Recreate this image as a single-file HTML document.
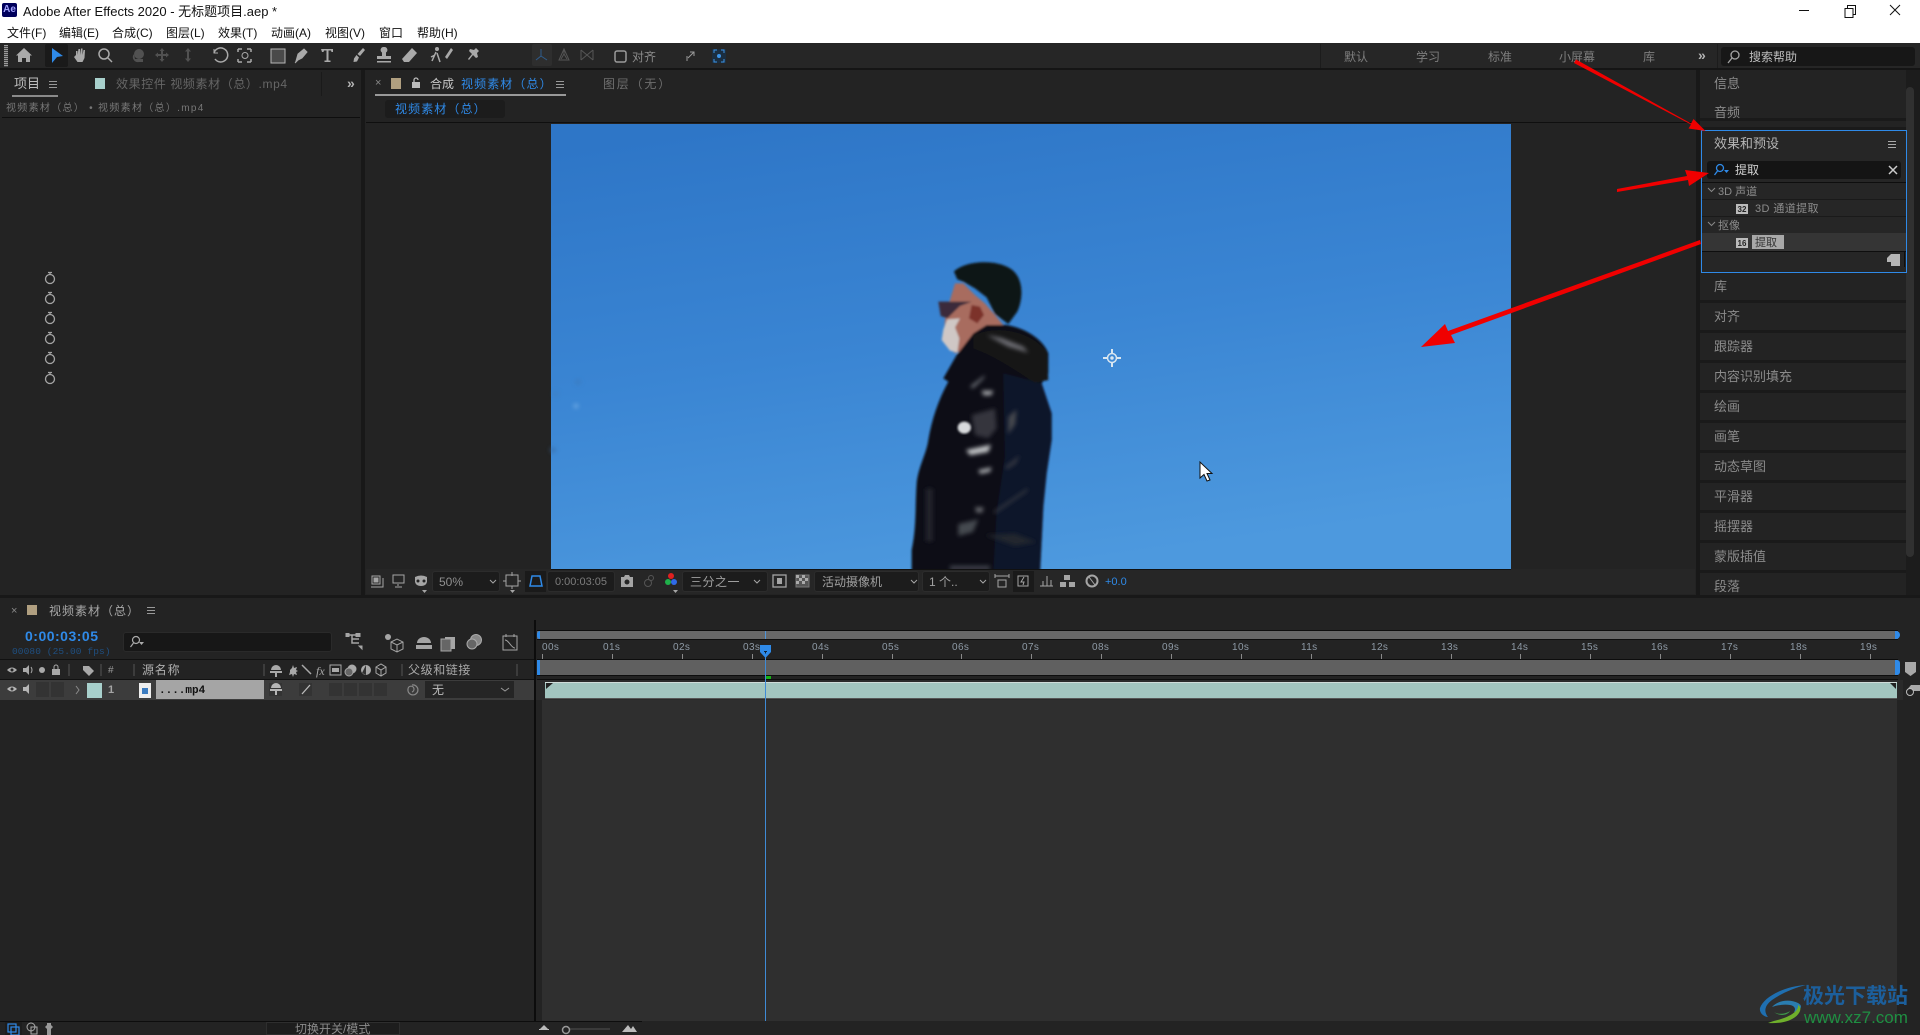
<!DOCTYPE html>
<html><head><meta charset="utf-8"><style>
html,body{margin:0;padding:0;width:1920px;height:1035px;overflow:hidden;background:#181818}
body{position:relative;font-family:"Liberation Sans","WenQuanYi Zen Hei","Noto Sans CJK SC",sans-serif;font-size:12px;color:#8f8f8f}
.a,.t{position:absolute}
.t{white-space:nowrap;line-height:16px;height:16px}
.m{color:#111;font-family:"Liberation Sans","Noto Sans CJK SC",sans-serif;font-size:12px;top:25px}
.w{color:#7e7e7e;top:49px}
.r{left:1714px;color:#8b8b8b;font-size:13px;transform:translateY(1px)}
.sep{position:absolute;left:1700px;width:206px;height:3px;background:#1a1a1a}
.n{top:642px;font-size:10px;letter-spacing:.4px;color:#8e9aa6;line-height:12px;height:12px}
.k{position:absolute;top:654px;width:1px;height:5px;background:#8a8a8a}
.box{position:absolute;background:#1c1c1c;border:1px solid #2c2c2c;border-radius:3px;box-sizing:border-box;height:21px;top:571px}
svg{position:absolute;overflow:visible}
.b{color:#2f8ae8}
</style></head><body>

<!-- title bar -->
<div class="a" style="left:0;top:0;width:1920px;height:43px;background:#fff"></div>
<div class="a" style="left:2px;top:3px;width:15px;height:14px;background:#00005b;border-radius:2px;color:#a3a3ff;font-size:10px;font-weight:bold;line-height:14px;text-align:center">Ae</div>
<div class="t" style="left:23px;top:4px;color:#111;font-size:13px;font-family:'Liberation Sans','Noto Sans CJK SC',sans-serif">Adobe After Effects 2020 - 无标题项目.aep *</div>
<div class="t m" style="left:7px">文件(F)</div><div class="t m" style="left:59px">编辑(E)</div><div class="t m" style="left:112px">合成(C)</div><div class="t m" style="left:166px">图层(L)</div><div class="t m" style="left:218px">效果(T)</div><div class="t m" style="left:271px">动画(A)</div><div class="t m" style="left:325px">视图(V)</div><div class="t m" style="left:379px">窗口</div><div class="t m" style="left:417px">帮助(H)</div>
<svg style="left:0;top:0" width="1920" height="30" fill="none" stroke="#111" stroke-width="1"><path d="M1799 10.500h10"/><path d="M1845 8.500h8v9h-8zM1847.500 8v-2.500h8v9h-2.500"/><path d="M1890 5l10 10M1900 5l-10 10"/></svg>

<!-- toolbar -->
<div class="a" style="left:0;top:43px;width:1920px;height:25px;background:#262626"></div>
<div class="a" style="left:0;top:68px;width:1920px;height:2px;background:#151515"></div>
<div class="a" style="left:4px;top:45px;width:4px;height:22px;background:repeating-linear-gradient(#9a9a9a 0 1px,#444 1px 2px)"></div>
<div class="a" style="left:45px;top:44px;width:23px;height:23px;background:#1a1a1a;border-radius:2px"></div>
<svg style="left:0;top:43px" width="760" height="25" viewBox="0 0 760 25">
<g fill="#a9a9a9"><path d="M24 5l8 7.500h-2v6.500h-4v-4h-4v4h-4v-6.500h-2z"/>
<path d="M52 5l11 8-6 1-5 6z" fill="#2f8ae8"/>
<path d="M76 12v-4l1.500 0v4l1-6h1.500v6l1-6.500h1.500v6.500l1-5h1.500l-.5 8-2 4h-5l-3.500-5z"/></g>
<g fill="none" stroke="#a9a9a9" stroke-width="1.500"><circle cx="104" cy="11" r="5"/><path d="M108 15l4 4"/>
<path d="M214 10a7 7 0 1 1 1 6" /><path d="M214 6v4h4" stroke-width="1"/>
<path d="M238 6h4M247 6h4M238 19h4M247 19h4M238 6v3M251 6v3M238 16v3M251 16v3" /><circle cx="245" cy="12.500" r="3" stroke-width="1"/>
</g>
<g fill="#515151"><circle cx="139" cy="11" r="5"/><path d="M134 11a5 5 0 0 0 5 8h4v-3h-8z"/><path d="M162 5l2.500 3h-1.500v3h3v-1.500l3 2.500-3 2.500v-1.500h-3v3h1.500l-2.500 3-2.500-3h1.500v-3h-3v1.500l-3-2.500 3-2.500v1.500h3v-3h-1.500z"/><path d="M188 5l3 3.500h-2v7h2l-3 3.500-3-3.500h2v-7h-2z"/></g>
<rect x="271" y="6" width="14" height="14" fill="#4a4a4a" stroke="#b5b5b5"/>
<path d="M296 18l2-7 6-5 3 3-5 6zM295 20l3-3" fill="#a9a9a9" stroke="#a9a9a9"/>
<path d="M321 6h12v3h-1.500l-.5-1.500h-2.500v10h2v1.500h-6v-1.500h2v-10h-2.500l-.5 1.500h-1.500z" fill="#a9a9a9"/>
<path d="M363 5l2 2-5 6-2.500-2zM356.500 12l2.500 2.500-2 4-3.500 .5.500-3.500z" fill="#a9a9a9"/>
<path d="M384 4a3 3 0 0 1 2 5.500v3.500h5v3h-14v-3h5v-3.500a3 3 0 0 1 2-5.500zM377 18h14v1.500h-14z" fill="#a9a9a9"/>
<path d="M412 5l5 5-8 9h-5l-2-3z" fill="#a9a9a9"/>
<circle cx="437" cy="6" r="2" fill="#a9a9a9"/><path d="M436 9l-4 9M437 10l3 9M435 12l-4 2" stroke="#a9a9a9" stroke-width="1.500"/><path d="M451 5l-6 9 2 2 6-9z" fill="#a9a9a9"/>
<path d="M476 5l3 3-2 2 1 4-2 1-3-3-4 5-1-1 4-5-3-3 1-2 4 1z" fill="#a9a9a9"/>
<rect x="532" y="1" width="20" height="22" fill="#2e2e2e" rx="2"/>
<g stroke="#2e5c8c" fill="none"><path d="M541 6v7l-5 4M541 13l6 4"/></g>
<g stroke="#555" fill="none"><path d="M564 6l-5 11h10z M564 6v5l-3 5M564 11l3 5"/><path d="M581 7l12 10M581 17l12-10M581 7v10M593 7v10" /></g>
<rect x="615" y="8" width="11" height="11" fill="none" stroke="#9a9a9a" stroke-width="1.500" rx="2"/>
<path d="M688 15l6-6M694 13v-4h-4M687 13v5" stroke="#9a9a9a" fill="none"/>
<rect x="712" y="6" width="14" height="14" fill="#1b2e40"/><path d="M714 10v-3h3M724 10v-3h-3M714 16v3h3M724 16v3h-3" stroke="#3d94e6" fill="none"/><circle cx="719" cy="13" r="2" fill="#3d94e6"/>
</svg>
<div class="t" style="left:632px;top:49px;color:#8a8a8a">对齐</div>
<div class="t w" style="left:1344px">默认</div><div class="t w" style="left:1416px">学习</div><div class="t w" style="left:1488px">标准</div><div class="t w" style="left:1559px">小屏幕</div><div class="t w" style="left:1643px">库</div>
<div class="t" style="left:1698px;top:47px;color:#b5b5b5;font-weight:bold;font-size:14px">»</div>
<div class="a" style="left:1721px;top:47px;width:194px;height:19px;background:#171717;border-radius:3px"></div>
<svg style="left:1726px;top:49px" width="16" height="16" fill="none" stroke="#a5a5a5" stroke-width="1.300"><circle cx="9" cy="6" r="4"/><path d="M6 9l-4 5"/></svg>
<div class="t" style="left:1749px;top:49px;color:#bdbdbd">搜索帮助</div>
<div class="a" style="left:1320px;top:44px;width:1px;height:24px;background:#1c1c1c"></div>
<div class="a" style="left:1717px;top:44px;width:1px;height:24px;background:#1c1c1c"></div>

<!-- left panel -->
<div class="a" style="left:0;top:70px;width:361px;height:525px;background:#232323"></div>
<div class="a" style="left:2px;top:117px;width:358px;height:1px;background:#0e0e0e"></div>
<div class="t" style="left:14px;top:76px;color:#bdbdbd;font-size:13px">项目</div>
<div class="a" style="left:12px;top:95px;width:46px;height:2px;background:#8a8a8a"></div>
<svg style="left:49px;top:80px" width="10" height="10" stroke="#999"><path d="M0 1.500h8M0 4.500h8M0 7.500h8"/></svg>
<div class="a" style="left:95px;top:78px;width:10px;height:11px;background:#a8d0cc"></div>
<div class="t" style="left:116px;top:76px;color:#666;letter-spacing:.6px">效果控件 视频素材（总）.mp4</div>
<div class="a" style="left:321px;top:72px;width:1px;height:24px;background:#1a1a1a"></div>
<div class="t" style="left:347px;top:75px;color:#b5b5b5;font-weight:bold;font-size:14px">»</div>
<div class="t" style="left:6px;top:101px;color:#777;font-size:10px;letter-spacing:1.300px">视频素材（总） • 视频素材（总）.mp4</div>
<svg style="left:44px;top:270px" width="14" height="120" fill="none" stroke="#a5a5a5" stroke-width="1.300">
<g><circle cx="6" cy="9" r="4.500"/><path d="M6 2v3M4 2.500h4"/></g>
<g transform="translate(0,20)"><circle cx="6" cy="9" r="4.500"/><path d="M6 2v3M4 2.500h4"/></g>
<g transform="translate(0,40)"><circle cx="6" cy="9" r="4.500"/><path d="M6 2v3M4 2.500h4"/></g>
<g transform="translate(0,60)"><circle cx="6" cy="9" r="4.500"/><path d="M6 2v3M4 2.500h4"/></g>
<g transform="translate(0,80)"><circle cx="6" cy="9" r="4.500"/><path d="M6 2v3M4 2.500h4"/></g>
<g transform="translate(0,100)"><circle cx="6" cy="9" r="4.500"/><path d="M6 2v3M4 2.500h4"/></g>
</svg>

<!-- comp panel -->
<div class="a" style="left:365px;top:70px;width:1331px;height:525px;background:#232323"></div>
<div class="t" style="left:375px;top:75px;color:#888;font-size:11px">×</div>
<div class="a" style="left:391px;top:78px;width:10px;height:11px;background:#b09f80"></div>
<svg style="left:411px;top:77px" width="11" height="12"><rect x="1" y="5" width="8" height="6" fill="#bbb"/><path d="M3 5V3a2 2 0 0 1 4 0" fill="none" stroke="#bbb" stroke-width="1.300"/></svg>
<div class="t" style="left:430px;top:76px;color:#c8c8c8">合成</div>
<div class="t b" style="left:461px;top:76px;letter-spacing:1.100px">视频素材（总）</div>
<svg style="left:556px;top:80px" width="10" height="10" stroke="#999"><path d="M0 1.500h8M0 4.500h8M0 7.500h8"/></svg>
<div class="a" style="left:375px;top:94px;width:191px;height:2px;background:#999"></div>
<div class="t" style="left:603px;top:76px;color:#6f6f6f;letter-spacing:1.800px">图层（无）</div>
<div class="a" style="left:385px;top:100px;width:120px;height:18px;background:#1c1c1c;border-radius:3px"></div>
<div class="t b" style="left:395px;top:101px;letter-spacing:1.100px">视频素材（总）</div>
<div class="a" style="left:366px;top:122px;width:1329px;height:1px;background:#0f0f0f"></div>

<!-- viewer image -->
<svg style="left:551px;top:124px" width="960" height="445" viewBox="551 124 960 445">
<defs><linearGradient id="sky" x1="0.200" y1="0" x2="0.500" y2="1"><stop offset="0" stop-color="#2e76c7"/><stop offset=".5" stop-color="#3a85d3"/><stop offset="1" stop-color="#4d99de"/></linearGradient>
<filter id="bs" x="-10%" y="-10%" width="120%" height="120%"><feGaussianBlur stdDeviation="3.500"/></filter><filter id="bt" x="-20%" y="-20%" width="140%" height="140%"><feGaussianBlur stdDeviation="6"/></filter><filter id="b2" x="-50%" y="-50%" width="200%" height="200%"><feGaussianBlur stdDeviation="2"/></filter></defs>
<clipPath id="cp"><rect x="551" y="124" width="960" height="445"/></clipPath>
<rect x="551" y="124" width="960" height="445" fill="url(#sky)"/>
<g filter="url(#b2)" opacity=".55"><circle cx="578" cy="382" r="3" fill="#3b78b8"/><circle cx="576" cy="406" r="2.500" fill="#8dc0ee"/><circle cx="553" cy="450" r="3" fill="#38689e"/><circle cx="556" cy="394" r="3" fill="#3f7fc0"/></g>
<g clip-path="url(#cp)"><g transform="translate(860,240) scale(.3333)">
<g filter="url(#bs)">
<!-- face -->
<path d="M285 130L270 180 255 240 250 300 285 340 320 325 360 270 430 255 405 225 375 190 345 165 310 130z" fill="#a86c5f"/>
<path d="M335 195l25 5 12 25-20 25-25-15z" fill="#7c302c"/>
<!-- mask -->
<path d="M262 238L250 268 245 300 270 332 292 338 298 295 285 262 300 235z" fill="#cfc7c5"/>
<!-- glasses -->
<path d="M235 185L335 185 300 198 262 235 242 228z" fill="#3a2c3a"/>
<!-- hair -->
<path d="M282 95C310 65 400 55 450 85 490 110 492 170 472 215L445 252 405 222 380 172 345 145 310 125 292 118z" fill="#111619"/>
<!-- coat -->
<path d="M290 345L250 415 265 425C235 480 215 540 205 600 200 640 175 680 170 730 165 800 170 860 155 930L155 1000 540 1000 550 800 560 700 575 600 575 520 545 430 565 400 565 340C550 300 500 265 440 255L380 255 340 280z" fill="#090c14"/>
<path d="M430 400L545 430 575 520 575 600 560 700 550 800 540 1000 400 1000 410 820 435 650z" fill="#10162a"/>
<path d="M340 290C380 258 500 260 560 335L565 420 525 428C470 395 420 355 340 325z" fill="#151519"/>
</g>
<g filter="url(#bt)">
<path d="M380 285l65 35 60 18-15-18-65-26z" fill="#6e6e74"/>
<path d="M330 440l45-35-4 10-32 30z" fill="#70737a"/>
<path d="M365 452h35l-6 14h-24z" fill="#a0a2a6"/>
<path d="M335 525l70-20 5 60-25 30-40-10z" fill="#34363d"/>
<path d="M318 630l75-16-8 22-55 10z" fill="#c0c2c5"/>
<path d="M355 690l40-8-5 14-30 6z" fill="#a5a7ab"/>
<path d="M445 530l25-22-4 45-22 30z" fill="#44464e"/>
<path d="M435 680l45-35-12 26-28 18z" fill="#333540"/>
<path d="M400 815l105-72-5 12-95 66z" fill="#343740"/>
<rect x="197" y="745" width="22" height="160" fill="#20242b"/>
<path d="M295 852l60-14-16 38-44 12z" fill="#45484f"/>
<path d="M345 802h26l-4 16h-18z" fill="#66686d"/>
<path d="M375 885l90-4 65 25-65 12z" fill="#22252d"/>
<rect x="270" y="977" width="120" height="14" fill="#3d4149"/>
</g>
<ellipse cx="313" cy="563" rx="20" ry="18" fill="#d8dadd" filter="url(#bs)"/>
</g></g>
</svg>
<svg style="left:1102px;top:348px" width="20" height="20" fill="none" stroke="#d9e6f0" stroke-width="1.500"><circle cx="10" cy="10" r="4.500"/><circle cx="10" cy="10" r="1" fill="#d9e6f0"/><path d="M10 1v5M10 14v5M1 10h5M14 10h5" stroke-width="2"/></svg>
<svg style="left:1199px;top:461px" width="14" height="22"><path d="M1 1v16l4-3.500 3 6.500 3-1-3-6.500h5z" fill="#fff" stroke="#111"/></svg>

<!-- viewer toolbar -->
<div class="a" style="left:366px;top:569px;width:1329px;height:25px;background:#262626"></div>
<div class="a" style="left:551px;top:569px;width:960px;height:1px;background:#111"></div>
<div class="box" style="left:432px;width:68px"></div><div class="box" style="left:547px;width:68px"></div><div class="box" style="left:682px;width:86px"></div><div class="box" style="left:814px;width:105px"></div><div class="box" style="left:922px;width:68px"></div>
<div class="a" style="left:525px;top:571px;width:21px;height:21px;background:#1a1a1a"></div>
<div class="a" style="left:1013px;top:571px;width:21px;height:21px;background:#1a1a1a"></div>
<div class="t" style="left:439px;top:574px;color:#8f8f8f">50%</div>
<div class="t" style="left:555px;top:574px;color:#7c7c7c;font-size:11px">0:00:03:05</div>
<div class="t" style="left:690px;top:574px;color:#a0a0a0;letter-spacing:.5px">三分之一</div>
<div class="t" style="left:822px;top:574px;color:#a0a0a0">活动摄像机</div>
<div class="t" style="left:929px;top:574px;color:#a0a0a0">1 个..</div>
<div class="t" style="left:1105px;top:574px;color:#2f8ae8;font-size:11px">+0.0</div>
<svg style="left:360px;top:569px" width="760" height="25" viewBox="360 569 760 25" fill="none" stroke="#a5a5a5">
<path d="M372 576h8v8h-8zM371 587h12v-9" /><rect x="374" y="578" width="4" height="4" fill="#a5a5a5"/>
<rect x="393" y="575" width="11" height="8"/><path d="M398 584v2M395 587h7"/>
<path d="M415 577q6-3 12 0v5q-1 4-6 4t-6-4z" fill="#a5a5a5" stroke="none"/><circle cx="418" cy="581" r="1.500" fill="#222" stroke="none"/><circle cx="424" cy="581" r="1.500" fill="#222" stroke="none"/>
<path d="M490 580l3 3 3-3" /><path d="M754 580l3 3 3-3M911 580l3 3 3-3M980 580l3 3 3-3"/>
<rect x="506" y="575" width="12" height="11"/><path d="M512 572v4M512 586v3M503 581h3M518 581h3"/>
<path d="M530 586l2-10h8l2 10z" stroke="#2f8ae8" stroke-width="1.500"/>
<path d="M621 577h3l1-2h4l1 2h3v10h-12z" fill="#a5a5a5" stroke="none"/><circle cx="627" cy="582" r="2.500" fill="#262626" stroke="none"/>
<circle cx="648" cy="583" r="3.500" stroke="#555"/><circle cx="651" cy="578" r="2.500" stroke="#555"/>
<circle cx="671" cy="576" r="3" fill="#e02020" stroke="none"/><circle cx="668" cy="582" r="3" fill="#1fb04a" stroke="none"/><circle cx="674" cy="582" r="3" fill="#2f6ae8" stroke="none"/>
<rect x="773" y="575" width="13" height="12" stroke-width="1.300"/><rect x="777" y="578" width="5" height="6" fill="#a5a5a5" stroke="none"/>
<rect x="796" y="575" width="13" height="12" fill="#555" stroke="#777"/><path d="M796 575h3v3h-3zM802 575h3v3h-3zM799 578h3v3h-3zM805 578h3v3h-3zM796 581h3v3h-3zM802 581h3v3h-3z" fill="#aaa" stroke="none"/>
<path d="M995 576h14M995 574v4M1009 574v4M998 580h8v7h-8z"/>
<path d="M1018 576h10v10h-10z"/><path d="M1024 577l-3 5h3l-1 3" />
<path d="M1040 586h13M1043 586v-5M1047 586v-10M1051 586v-6"/>
<rect x="1064" y="575" width="6" height="5" fill="#a5a5a5" stroke="none"/><rect x="1060" y="582" width="6" height="5" fill="#a5a5a5" stroke="none"/><rect x="1069" y="582" width="6" height="5" fill="#a5a5a5" stroke="none"/>
<circle cx="1092" cy="581" r="5.500" stroke-width="2"/><path d="M1089 577l6 8" />
</svg>
<svg style="left:360px;top:590px" width="330" height="6" fill="#a5a5a5"><path d="M62 0h5l-2.500 3zM150 0h5l-2.500 3zM313 0h5l-2.500 3z"/></svg>

<!-- right panel -->
<div class="a" style="left:1700px;top:70px;width:206px;height:525px;background:#232323"></div>
<div class="a" style="left:1906px;top:70px;width:14px;height:525px;background:#1c1c1c"></div>
<div class="a" style="left:1906px;top:87px;width:8px;height:470px;background:#303030;border-radius:4px"></div>
<div class="sep" style="top:118px"></div><div class="sep" style="top:127px;height:3px"></div>
<div class="t r" style="top:75px">信息</div><div class="t r" style="top:104px">音频</div>
<div class="t r" style="top:278px">库</div><div class="t r" style="top:308px">对齐</div><div class="t r" style="top:338px">跟踪器</div><div class="t r" style="top:368px">内容识别填充</div><div class="t r" style="top:398px">绘画</div><div class="t r" style="top:428px">画笔</div><div class="t r" style="top:458px">动态草图</div><div class="t r" style="top:488px">平滑器</div><div class="t r" style="top:518px">摇摆器</div><div class="t r" style="top:548px">蒙版插值</div><div class="t r" style="top:578px">段落</div>
<div class="sep" style="top:300px"></div><div class="sep" style="top:330px"></div><div class="sep" style="top:360px"></div><div class="sep" style="top:390px"></div><div class="sep" style="top:420px"></div><div class="sep" style="top:450px"></div><div class="sep" style="top:480px"></div><div class="sep" style="top:510px"></div><div class="sep" style="top:540px"></div><div class="sep" style="top:570px"></div>
<!-- effects -->
<div class="a" style="left:1701px;top:130px;width:206px;height:143px;box-sizing:border-box;border:1px solid #2f8ae8;background:#262626"></div>
<div class="t" style="left:1714px;top:136px;color:#b5b5b5;font-size:13px">效果和预设</div>
<svg style="left:1888px;top:140px" width="10" height="10" stroke="#aaa"><path d="M0 1.500h8M0 4.500h8M0 7.500h8"/></svg>
<div class="a" style="left:1707px;top:161px;width:194px;height:18px;background:#141414;border-radius:3px"></div>
<svg style="left:1713px;top:163px" width="20" height="14" fill="none" stroke="#2f8ae8" stroke-width="1.300"><circle cx="7" cy="5" r="3.500"/><path d="M4.500 8l-3 4"/><path d="M11 7h5l-2.500 3z" fill="#2f8ae8" stroke="none"/></svg>
<div class="t" style="left:1735px;top:162px;color:#d0d0d0;font-size:12px">提取</div>
<svg style="left:1889px;top:166px" width="9" height="9" stroke="#ccc" stroke-width="1.500"><path d="M0 0l8 8M8 0l-8 8"/></svg>
<div class="a" style="left:1702px;top:182px;width:204px;height:1px;background:#0e0e0e"></div>
<div class="a" style="left:1702px;top:199px;width:204px;height:1px;background:#1a1a1a"></div>
<div class="a" style="left:1702px;top:216px;width:204px;height:1px;background:#1a1a1a"></div>
<div class="a" style="left:1702px;top:233px;width:204px;height:18px;background:#353535"></div>
<div class="a" style="left:1752px;top:235px;width:32px;height:14px;background:#a8a8a8"></div>
<div class="a" style="left:1702px;top:251px;width:204px;height:1px;background:#0e0e0e"></div>
<div class="a" style="left:1904px;top:252px;width:1px;height:15px;background:#0e0e0e"></div>
<svg style="left:1708px;top:185px" width="10" height="50" fill="none" stroke="#888"><path d="M0 3l3.500 3.500L7 3M0 37l3.500 3.500L7 37"/></svg>
<div class="t" style="left:1718px;top:184px;color:#8c8c8c;font-size:11px">3D 声道</div>
<div class="t" style="left:1755px;top:201px;color:#8c8c8c;font-size:11px;letter-spacing:.4px">3D 通道提取</div>
<div class="t" style="left:1718px;top:218px;color:#8c8c8c;font-size:11px">抠像</div>
<div class="t" style="left:1755px;top:235px;color:#333;font-size:11px">提取</div>
<div class="a" style="left:1736px;top:204px;width:12px;height:10px;background:#bbb;font-size:8px;line-height:11px;color:#222;font-weight:bold;text-align:center">32</div>
<div class="a" style="left:1736px;top:238px;width:12px;height:10px;background:#bbb;font-size:8px;line-height:11px;color:#222;font-weight:bold;text-align:center">16</div>
<svg style="left:1887px;top:254px" width="13" height="12"><path d="M4 0h9v12H4V8H0V4z" fill="#b5b5b5"/></svg>

<!-- timeline -->
<div class="a" style="left:0;top:598px;width:1920px;height:423px;background:#232323"></div>
<div class="t" style="left:11px;top:603px;color:#888;font-size:11px">×</div>
<div class="a" style="left:27px;top:605px;width:10px;height:10px;background:#b09f80"></div>
<div class="t" style="left:49px;top:603px;color:#a8a8a8;letter-spacing:1px">视频素材（总）</div>
<svg style="left:147px;top:606px" width="10" height="10" stroke="#999"><path d="M0 1.500h8M0 4.500h8M0 7.500h8"/></svg>
<div class="t" style="left:25px;top:628px;color:#2f8ae8;font-weight:bold;font-size:14px;letter-spacing:.5px">0:00:03:05</div>
<div class="t" style="left:12px;top:644px;color:#1f4f80;font-size:9.500px;letter-spacing:.1px;font-family:'Liberation Mono',monospace">00080 (25.00 fps)</div>
<div class="a" style="left:123px;top:632px;width:209px;height:20px;background:#171717;border-radius:3px;border:1px solid #2a2a2a;box-sizing:border-box"></div>
<svg style="left:129px;top:635px" width="18" height="14" fill="none" stroke="#aaa" stroke-width="1.200"><circle cx="7" cy="5" r="3.500"/><path d="M4.500 8l-3 4"/><path d="M10 7h5l-2.500 3z" fill="#aaa" stroke="none"/></svg>
<svg style="left:345px;top:630px" width="180" height="25" fill="none" stroke="#a5a5a5">
<path d="M3 5h8M7 5v8h7M7 9h7" stroke-width="1.500"/><rect x="1" y="3.500" width="3" height="3" fill="#a5a5a5"/><rect x="11" y="3.500" width="4" height="3" fill="#a5a5a5"/><path d="M14 16l3 3 0-3z" fill="#a5a5a5"/>
<path d="M46 12l6-3 6 3v7l-6 3-6-3zM46 12l6 3 6-3M52 15v7"/><circle cx="43" cy="7" r="3" fill="#a5a5a5" stroke="none"/>
<path d="M72 13a7 6 0 0 1 14 0zM71 15h16v4H71zM79 6v2" fill="#a5a5a5" stroke="none"/>
<rect x="100" y="7" width="10" height="12" fill="#a5a5a5" stroke="none"/><rect x="96" y="9" width="10" height="12" fill="#666" stroke="#a5a5a5"/>
<circle cx="131" cy="10" r="5.500" fill="#888" stroke="#aaa"/><circle cx="127" cy="14" r="5" fill="#666" stroke="#aaa"/>
<rect x="158" y="6" width="14" height="14"/><path d="M160 10c4 0 6 8 10 8M161 4v3M169 4v3"/>
</svg>
<div class="a" style="left:0;top:659px;width:536px;height:1px;background:#111"></div>
<div class="a" style="left:0;top:679px;width:536px;height:1px;background:#111"></div>
<div class="a" style="left:0;top:680px;width:534px;height:20px;background:#3c3c3c"></div>
<div class="t" style="left:142px;top:662px;color:#b0b0b0;font-size:12px;letter-spacing:.8px">源名称</div>
<div class="t" style="left:408px;top:662px;color:#aaa;font-size:12px;letter-spacing:.6px">父级和链接</div>
<div class="t" style="left:108px;top:663px;color:#999;font-size:10px">#</div>
<svg style="left:0;top:660px" width="534" height="40" fill="#a9a9a9">
<path d="M7 10q5-5 10 0q-5 5-10 0z"/><circle cx="12" cy="10" r="1.500" fill="#232323"/>
<path d="M23 8h3l3-3v10l-3-3h-3z"/><path d="M31 7q2 3 0 6" stroke="#a9a9a9" fill="none"/>
<circle cx="42" cy="10" r="3"/><rect x="52" y="9" width="8" height="6"/><path d="M54 9V7a2 2 0 0 1 4 0v2" fill="none" stroke="#a9a9a9"/>
<path d="M83 6h6l5 5-5 5-6-6z"/>
<path d="M69 4v12M101 4v12M134 4v12M264 4v12M402 4v12M517 4v12" stroke="#555" fill="none"/>
<path d="M271 10a5 5 0 0 1 10 0zM270 11h12v2h-12zM275 13h2v4h-2z"/>
<path d="M290 10l2-2 1-3 1 3 3-1-1 3 2 1-2 1 1 3-3-1-1 3-1-3-3 1 1-3z"/>
<path d="M302 5l9 9" stroke="#a9a9a9" stroke-width="1.500" fill="none"/>
<text x="316" y="15" font-size="12" font-style="italic" font-family="Liberation Serif">fx</text>
<rect x="330" y="5" width="11" height="10" fill="none" stroke="#a9a9a9"/><rect x="332" y="8" width="7" height="4"/>
<circle cx="352" cy="9" r="4.500"/><circle cx="349" cy="12" r="4" fill="#666" stroke="#a9a9a9"/>
<circle cx="366" cy="10" r="5"/><path d="M366 5v10l-4-2z" fill="#333"/>
<path d="M376 7l5-3 5 3v6l-5 3-5-3zM376 7l5 3 5-3M381 10v6" fill="none" stroke="#a9a9a9"/>
</svg>
<svg style="left:0;top:680px" width="534" height="20">
<rect x="36" y="2" width="13" height="15" fill="#333"/><rect x="51" y="2" width="13" height="15" fill="#333"/>
<rect x="87" y="3" width="15" height="15" fill="#a8d0cc"/>
<path d="M76 6l3 4-3 4" fill="none" stroke="#8a8a8a"/>
<g fill="#b5b5b5"><path d="M7 9q5-5 10 0q-5 5-10 0z"/><path d="M23 7h3l3-3v10l-3-3h-3z"/></g><circle cx="12" cy="9" r="1.500" fill="#333"/>
<rect x="139" y="3" width="12" height="15" fill="#eee"/><rect x="142" y="8" width="6" height="6" fill="#3c7cc0"/>
<rect x="156" y="0" width="108" height="19" fill="#a5a5a5"/>
<rect x="269" y="3" width="13" height="13" fill="#333"/><rect x="299" y="3" width="13" height="13" fill="#333"/>
<rect x="329" y="3" width="13" height="13" fill="#333"/><rect x="344" y="3" width="13" height="13" fill="#333"/><rect x="359" y="3" width="13" height="13" fill="#333"/><rect x="374" y="3" width="13" height="13" fill="#333"/>
<g fill="#b5b5b5"><path d="M271 8a5 5 0 0 1 10 0zM270 9h12v2h-12zM275 11h2v4h-2z"/></g>
<path d="M302 14l8-9" stroke="#bbb" stroke-width="1.300"/>
<path d="M412 5a5 5 0 1 1-4 4a3 3 0 1 1 4 3" fill="none" stroke="#888" stroke-width="1.200"/>
<rect x="425" y="1" width="89" height="17" fill="#252525"/>
<path d="M501 8l4 3 4-3" fill="none" stroke="#999"/>
</svg>
<div class="t" style="left:159px;top:683px;color:#111;font-weight:bold;font-size:11px;font-family:'Liberation Mono',monospace">....mp4</div>
<div class="t" style="left:108px;top:682px;color:#a5a5a5;font-weight:bold;font-size:11px">1</div>
<div class="t" style="left:432px;top:682px;color:#bbb">无</div>

<!-- timeline right -->
<div class="a" style="left:534px;top:620px;width:2px;height:401px;background:#0c0c0c"></div>
<div class="a" style="left:542px;top:700px;width:1355px;height:321px;background:#2f2f2f"></div>
<div class="a" style="left:536px;top:680px;width:1367px;height:20px;background:#2a2a2a"></div>
<div class="a" style="left:537px;top:631px;width:1361px;height:8px;background:#686868"></div>
<div class="a" style="left:537px;top:660px;width:1361px;height:15px;background:#606060"></div>
<div class="a" style="left:537px;top:630px;width:1361px;height:1px;background:#0d0d0d"></div>
<div class="a" style="left:537px;top:639px;width:1361px;height:1px;background:#0d0d0d"></div>
<div class="a" style="left:537px;top:659px;width:1361px;height:1px;background:#0d0d0d"></div>
<div class="a" style="left:537px;top:675px;width:1361px;height:1px;background:#0d0d0d"></div>
<div class="a" style="left:537px;top:679px;width:1361px;height:1px;background:#0d0d0d"></div>
<div class="a" style="left:537px;top:631px;width:3px;height:8px;background:#2f8ae8;border-radius:3px 0 0 3px"></div>
<div class="a" style="left:537px;top:660px;width:3px;height:15px;background:#2f8ae8"></div>
<div class="a" style="left:1895px;top:631px;width:5px;height:8px;background:#2f8ae8;border-radius:0 4px 4px 0"></div>
<div class="a" style="left:1895px;top:660px;width:5px;height:15px;background:#2f8ae8;border-radius:0 3px 3px 0"></div>
<div class="a" style="left:765px;top:676px;width:6px;height:3px;background:#16b016"></div>
<div class="a" style="left:545px;top:682px;width:1352px;height:16px;background:#a2c5bf;border-top:1px solid #cfdcd9;box-sizing:border-box"></div>
<svg style="left:545px;top:683px" width="1352" height="8"><path d="M1 0h7l-7 6z" fill="#222"/><path d="M1351 0h-6l6 6z" fill="#222"/></svg>
<div class="a" style="left:545px;top:698px;width:1352px;height:1px;background:#555"></div>
<!-- ruler -->
<div class="t n" style="left:542px">00s</div><div class="t n" style="left:603px">01s</div><div class="t n" style="left:673px">02s</div><div class="t n" style="left:743px">03s</div><div class="t n" style="left:812px">04s</div><div class="t n" style="left:882px">05s</div><div class="t n" style="left:952px">06s</div><div class="t n" style="left:1022px">07s</div><div class="t n" style="left:1092px">08s</div><div class="t n" style="left:1162px">09s</div><div class="t n" style="left:1232px">10s</div><div class="t n" style="left:1301px">11s</div><div class="t n" style="left:1371px">12s</div><div class="t n" style="left:1441px">13s</div><div class="t n" style="left:1511px">14s</div><div class="t n" style="left:1581px">15s</div><div class="t n" style="left:1651px">16s</div><div class="t n" style="left:1721px">17s</div><div class="t n" style="left:1790px">18s</div><div class="t n" style="left:1860px">19s</div>
<div class="k" style="left:542px"></div><div class="k" style="left:612px"></div><div class="k" style="left:682px"></div><div class="k" style="left:752px"></div><div class="k" style="left:822px"></div><div class="k" style="left:892px"></div><div class="k" style="left:961px"></div><div class="k" style="left:1031px"></div><div class="k" style="left:1101px"></div><div class="k" style="left:1171px"></div><div class="k" style="left:1241px"></div><div class="k" style="left:1311px"></div><div class="k" style="left:1381px"></div><div class="k" style="left:1451px"></div><div class="k" style="left:1520px"></div><div class="k" style="left:1590px"></div><div class="k" style="left:1660px"></div><div class="k" style="left:1730px"></div><div class="k" style="left:1800px"></div><div class="k" style="left:1870px"></div>
<!-- playhead -->
<div class="a" style="left:765px;top:631px;width:1px;height:8px;background:#4f94d8"></div>
<div class="a" style="left:765px;top:655px;width:1px;height:366px;background:#3f8bd6"></div>
<svg style="left:760px;top:645px" width="12" height="14"><path d="M0 0h11v7l-5.500 6-5.500-6z" fill="#2f8ae8"/><path d="M4 6.500h3M5.500 6.500v2" stroke="#123" /></svg>
<!-- far right -->
<svg style="left:1903px;top:660px" width="17" height="40"><path d="M2 2h11v10l-5.500 4-5.500-4z" fill="#a8a8a8"/><path d="M3 31l5-6h9v6h-5" fill="#a8a8a8"/><circle cx="7" cy="32" r="3.500" fill="#232323" stroke="#bbb"/></svg>

<!-- bottom bar -->
<div class="a" style="left:0;top:1021px;width:1920px;height:14px;background:#232323"></div>
<div class="a" style="left:0;top:1021px;width:642px;height:1px;background:#0d0d0d"></div>
<div class="a" style="left:5px;top:1022px;width:17px;height:13px;background:#1d1d1d"></div>
<div class="a" style="left:266px;top:1022px;width:134px;height:13px;background:#1d1d1d;border:1px solid #2e2e2e;box-sizing:border-box"></div>
<div class="t" style="left:295px;top:1021px;color:#8c8c8c">切换开关/模式</div>
<svg style="left:0;top:1021px" width="660" height="14" fill="none"><g stroke="#2f8ae8" stroke-width="1.200"><rect x="8" y="3" width="8" height="8"/><rect x="11" y="6" width="8" height="8"/></g>
<g stroke="#aaa"><circle cx="31" cy="6" r="4"/><rect x="31" y="6" width="6" height="7"/></g>
<rect x="47" y="2" width="4" height="12" fill="#999"/><path d="M45 6l2 2v-4zM53 6l-2 2v-4z" fill="#999"/>
<path d="M540 8l4-4 4 4zM539 8h10v1h-10z" fill="#bbb"/><rect x="570" y="7" width="40" height="2" fill="#3a3a3a"/><circle cx="566" cy="9" r="3.500" stroke="#999" stroke-width="1.500"/>
<path d="M622 11l6-7 3 4 2-3 4 6z" fill="#bbb"/></svg>

<!-- red arrows -->
<svg style="left:0;top:0" width="1920" height="600">
<path d="M1574 63l2-3.500 115 64 2.500-4.500 12 12-17-2.500 2.500-4z" fill="#f00000"/>
<path d="M1617 192l0-3 70-13-2-6 24 3-20 13-1-6z" fill="#f00000"/>
<path d="M1700 240l1 4-250 91 4 8-34 4 24-23 3 7z" fill="#f00000"/>
</svg>

<!-- watermark -->
<svg style="left:1758px;top:982px" width="60" height="44" viewBox="0 0 60 44">
<path d="M48 3C28 4 6 14 2 26c-1 5 4 9 8 9C6 30 6 24 14 18 24 11 36 6 48 3z" fill="#1f6fb0"/>
<path d="M14 25c6-7 18-8 26-4 6 3 2 8-4 9 2-3 1-6-4-7-6-1-12 0-18 2z" fill="#2a7db0"/>
<path d="M10 41c12 1 28-2 32-12 1-3 0-5-2-6 1 6-8 11-14 13-5 2-11 3-16 5z" fill="#6fb02c"/>
<path d="M16 30c4 3 12 2 16-1-2 4-10 6-16 1z" fill="#3d9a4a"/>
</svg>
<div class="t" style="left:1803px;top:984px;height:22px;line-height:22px;color:#1c5f9c;font-weight:bold;font-size:21px;font-family:'Noto Sans CJK SC',sans-serif">极光下载站</div>
<div class="t" style="left:1804px;top:1009px;color:#1f8f42;font-size:17px;height:18px;line-height:18px">www.xz7.com</div>
</body></html>
